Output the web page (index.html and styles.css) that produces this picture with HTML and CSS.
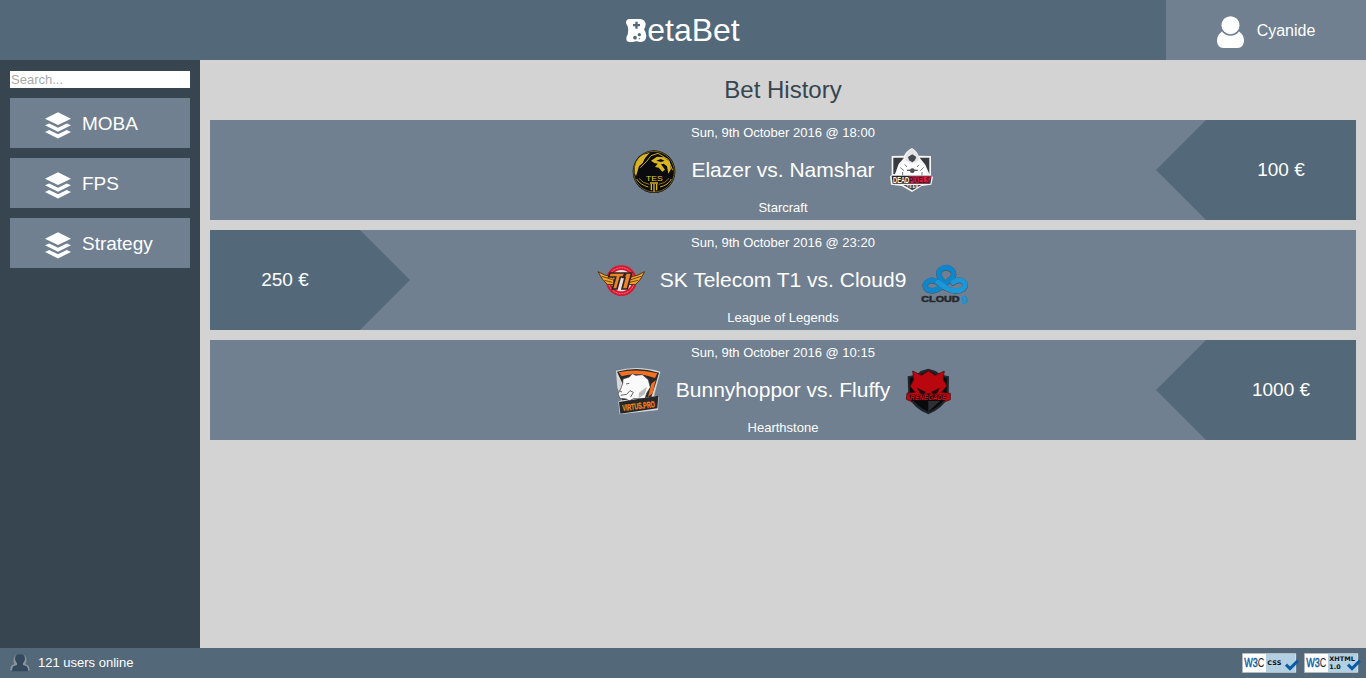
FILE: index.html
```html
<!DOCTYPE html>
<html lang="en">
<head>
<meta charset="utf-8">
<title>BetaBet</title>
<link rel="stylesheet" href="styles.css">
</head>
<body>
<header class="top">
  <h1 class="brand"><svg class="brand-b" viewBox="48 36 63 75"><path fill="#fff" d="M56 39H92Q106 42 107 54Q107 63 102 70Q108 78 109 90Q108 106 94 108Q87 109 82 106Q76 105 71 107Q65 109 57 108Q48 106 49 97Q49 91 53 86Q57 73 53 61Q48 56 48 48Q49 40 56 39Z"/><g fill="#536878"><path d="M76 47h7v7h7v7h-7v7h-7v-7h-7v-7h7z"/><circle cx="88" cy="86" r="5"/><circle cx="75" cy="95" r="5.500"/><circle cx="88" cy="98" r="2"/></g></svg>etaBet</h1>
  <a class="user"><svg class="user-icon" viewBox="0 0 28 32"><circle cx="13.500" cy="9.200" r="9" fill="#fff"/><path fill="#fff" d="M5 15.500C7.500 18.500 10 19.800 13.500 19.800S19.500 18.500 22 15.500C25 17.500 27 20.500 27 24.500C27 29 24.500 32 20.500 32H6.500C2.500 32 0 29 0 24.500C0 20.500 2 17.500 5 15.500Z"/></svg><span>Cyanide</span></a>
</header>
<div class="middle">
  <nav class="side">
    <input class="search" type="text" placeholder="Search...">
    <a class="cat"><svg class="layers" viewBox="0 0 26 27"><path d="M13 .2L26 6.700L13 13L0 6.700Z"/><path d="M0 13.200L4.200 11.500L13 15.700L21.800 11.500L26 13.200L13 19.700Z"/><path d="M0 19.900L4.200 18L13 22.200L21.800 18L26 19.900L13 26.500Z"/></svg><span>MOBA</span></a>
    <a class="cat"><svg class="layers" viewBox="0 0 26 27"><path d="M13 .2L26 6.700L13 13L0 6.700Z"/><path d="M0 13.200L4.200 11.500L13 15.700L21.800 11.500L26 13.200L13 19.700Z"/><path d="M0 19.900L4.200 18L13 22.200L21.800 18L26 19.900L13 26.500Z"/></svg><span>FPS</span></a>
    <a class="cat"><svg class="layers" viewBox="0 0 26 27"><path d="M13 .2L26 6.700L13 13L0 6.700Z"/><path d="M0 13.200L4.200 11.500L13 15.700L21.800 11.500L26 13.200L13 19.700Z"/><path d="M0 19.900L4.200 18L13 22.200L21.800 18L26 19.900L13 26.500Z"/></svg><span>Strategy</span></a>
  </nav>
  <main class="content">
    <h2 class="title">Bet History</h2>
    <section class="bet">
      <div class="info">
        <p class="date">Sun, 9th October 2016 @ 18:00</p>
        <div class="match">
          <svg class="logo" viewBox="9 7 150 150">
            <circle cx="87" cy="84" r="64" fill="#0b0b0d"/>
            <circle cx="87" cy="84" r="61" fill="none" stroke="#a3871a" stroke-width="2"/>
            <path fill="#d9b423" d="M29 88Q26 50 53 34L75 27Q58 42 53 58L42 68L33 98Z"/>
            <path fill="none" stroke="#caa520" stroke-width="3" d="M46 72L66 52L78 36L99 29L130 48L143 80M35 106Q45 123 70 130M139 106Q130 124 105 130"/>
            <path fill="none" stroke="#8f761c" stroke-width="3" d="M42 104Q53 119 73 122M132 104Q122 119 101 122"/>
            <path fill="#d9b423" d="M78 51L96 39L117 41L134 54L138 76L130 90L126 68L116 60L108 62L120 78L112 84L101 72L90 70L98 60L88 58Z"/>
            <path fill="#0b0b0d" d="M94 51L107 46L119 51L108 55Z"/>
            <path stroke="#d9b423" stroke-width="4" d="M75 118H99M79 121V140M87 121V145M95 121V140"/>
            <text x="88" y="111" text-anchor="middle" class="mark plain" font-size="24" fill="#e7c929" textLength="50" lengthAdjust="spacingAndGlyphs">TES</text>
          </svg>
          <span class="teams">Elazer vs. Namshar</span>
          <svg class="logo" viewBox="18 10 150 150">
            <path fill="#f5f5f5" d="M90 16Q104 24 110 39L147 40V98L153 103L148 126L119 130L90 148L59 130L27 126L24 101L29 97V40L66 39Q73 24 90 16Z"/>
            <path fill="#383c41" d="M34 45H66L50 64L39 94H34ZM113 45H142V94L130 66Z"/>
            <path fill="#e4e4e6" d="M69 46L77 27L90 18L103 28L111 46L107 57L91 65L73 56Z"/>
            <path fill="#45484e" d="M78 43L91 35L103 43L99 53L91 59L81 53Z"/>
            <path fill="#fff" d="M73 55L91 63L108 54L130 72L134 98H42L49 69Z"/>
            <path fill="none" stroke="#74787d" stroke-width="3" d="M55 75L66 84M125 74L115 84M68 65L75 73M111 66L105 73M62 98V88M120 98V88"/>
            <circle cx="91" cy="84" r="7" fill="#42464c"/><path stroke="#555" stroke-width="4" d="M75 83H107"/>
            <path fill="#25272b" d="M29 99H149L145 123H32Z"/>
            <path fill="#d91f47" d="M82 101H147L143 122H82Z"/>
            <text x="33" y="120" class="mark" font-size="25" fill="#fff" textLength="110" lengthAdjust="spacingAndGlyphs">DEAD<tspan fill="#4c1020">PIXELS</tspan></text>
            <path fill="#3d4045" d="M64 127H118L91 143Z"/>
            <text x="91" y="136" text-anchor="middle" class="mark" font-size="9" fill="#fff" textLength="34">TEAM</text>
          </svg>
        </div>
        <p class="game">Starcraft</p>
      </div>
      <div class="stake right">100 €</div>
    </section>
    <section class="bet">
      <div class="info">
        <p class="date">Sun, 9th October 2016 @ 23:20</p>
        <div class="match">
          <svg class="logo" viewBox="20 4 150 150">
            <circle cx="93" cy="78" r="46" fill="#d9152f"/>
            <circle cx="93" cy="78" r="39" fill="none" stroke="#ef9aa8" stroke-width="3" stroke-dasharray="3 2"/>
            <circle cx="93" cy="78" r="32" fill="#ecdede"/>
            <path fill="#efa72b" stroke="#5a3516" stroke-width="3" d="M23 51L43 61L66 66L74 90L51 89L39 77L32 67ZM163 51L143 61L122 67L112 90L136 89L148 77L154 67Z"/>
            <path fill="none" stroke="#754415" stroke-width="3" d="M34 65L66 75M42 77L66 83M152 65L122 75M144 77L118 83"/>
            <path fill="#e8842a" stroke="#31201e" stroke-width="5" d="M59 55H104L98 67H90L80 103H66L76 67H55ZM108 55H124L111 103H95L104 68H99Z"/>
          </svg>
          <span class="teams">SK Telecom T1 vs. Cloud9</span>
          <svg class="logo" viewBox="21 -6 150 150">
            <g fill="none" stroke="#3f586b" stroke-width="17" stroke-linejoin="round" stroke-linecap="round"><path d="M91 70Q72 45 87 35Q103 23 119 36Q132 50 118 62L91 85Q69 104 48 96Q33 85 44 74Q60 61 78 74L102 91Q134 107 154 93Q166 80 153 71Q138 61 123 75"/></g>
            <g fill="none" stroke="#0f86cc" stroke-width="15" stroke-linejoin="round" stroke-linecap="round"><path d="M91 69Q72 44 87 34Q103 22 119 35Q132 49 118 61L91 84Q69 103 48 95Q33 84 44 73Q60 60 78 73"/><path stroke="#1c98d8" d="M78 73L102 90Q134 106 154 92Q166 79 153 70Q138 60 123 74"/></g>
            <text x="28" y="131" class="mark" font-size="25" fill="#25282b" stroke="#25282b" stroke-width="1.500" textLength="115" lengthAdjust="spacingAndGlyphs">CLOUD</text>
            <text x="145" y="137" class="mark" font-size="33" fill="#1793d2" stroke="#1793d2" textLength="21" lengthAdjust="spacingAndGlyphs">9</text>
          </svg>
        </div>
        <p class="game">League of Legends</p>
      </div>
      <div class="stake left">250 €</div>
    </section>
    <section class="bet">
      <div class="info">
        <p class="date">Sun, 9th October 2016 @ 10:15</p>
        <div class="match">
          <svg class="logo" viewBox="15 12 150 150">
            <path fill="#d8d8d8" d="M24 26Q89 8 157 29L148 64L138 101L152 103L150 144L35 157L31 119L42 113L28 77Z"/>
            <path fill="#292929" d="M27 29Q90 12 153 32L143 65L130 105L42 115L47 72Z"/>
            <path fill="#f37021" d="M32 31Q88 19 148 34L141 48Q89 28 41 43ZM130 65L143 55L134 94L120 105Z"/>
            <path fill="#fafafa" stroke="#3b3b3b" stroke-width="2" d="M45 51L64 45L73 35L83 40L103 38L121 53L127 76L116 94L111 110H76L64 117L55 111L36 109L30 96L38 81L44 65Z"/>
            <path fill="none" stroke="#666" stroke-width="3" d="M38 100L56 97L66 86L76 91L68 105M54 66L64 64M34 86L42 90"/>
            <path fill="#bbb" d="M93 92L117 74L110 97L92 108Z"/>
            <path fill="#272727" d="M33 120L151 101L148 139L37 155Z"/>
            <text x="44" y="147" class="mark" transform="rotate(-7 44 147)" font-size="26" fill="#f58220" stroke="#f58220" textLength="98" lengthAdjust="spacingAndGlyphs">VIRTUS.PRO</text>
          </svg>
          <span class="teams">Bunnyhoppor vs. Fluffy</span>
          <svg class="logo" viewBox="15 12 150 150">
            <path fill="#20252a" d="M29 43Q58 40 68 27L91 20L113 27Q128 40 153 43L152 102Q136 138 91 157Q45 138 31 102Z"/>
            <path fill="#090a0c" d="M35 49L67 38L91 27L115 38L146 49V101Q128 135 91 149Q53 132 37 101Z"/>
            <path fill="#2c3034" d="M91 117H126L91 149Z"/>
            <path fill="#b9060f" stroke="#44090e" stroke-width="2" d="M44 27L71 40L91 26L111 40L139 27L135 52L147 72L130 91L157 94V113L139 120L126 107H57L42 120L25 112L27 93L52 91L36 73L47 54Z"/>
            <path fill="#26090d" d="M57 77L84 90L77 98L65 93ZM125 77L99 90L107 98L118 93ZM85 94H99L91 100Z"/>
            <path fill="#17090b" d="M34 98H146L141 117H40Z"/>
            <text x="91" y="114" text-anchor="middle" class="mark slant" font-size="19" fill="#d20b16" textLength="108" lengthAdjust="spacingAndGlyphs">RENEGADE</text>
          </svg>
        </div>
        <p class="game">Hearthstone</p>
      </div>
      <div class="stake right">1000 €</div>
    </section>
  </main>
</div>
<footer class="bottom">
  <div class="online"><svg class="people" viewBox="30 27 60 54"><path fill="#8c9499" d="M47 31H73Q81 38 79 50L76 57L86 62L90 76H30L33 63L43 57Q36 43 47 31Z"/><path fill="#34495e" d="M60 28Q75 28 75 41Q75 49 69 55V60L80 64Q85 68 84 79H36Q36 68 40 64L51 60V55Q45 49 45 41Q45 28 60 28Z"/></svg><span>121 users online</span></div>
  <div class="badges">
    <svg class="badge" viewBox="18 14 171 60"><path fill="#fff" stroke="#99a3aa" stroke-width="2" d="M19 15H180V73H19Z"/><path fill="#b3d0e2" d="M90 17H178V71H90Z"/><text x="25" y="57" class="w3" textLength="60" lengthAdjust="spacingAndGlyphs">W3<tspan class="c">C</tspan></text><text x="94" y="51" class="std" textLength="42" lengthAdjust="spacingAndGlyphs">CSS</text><path fill="none" stroke="#0c5ca5" stroke-width="9" d="M150 49L162 61L186 37"/></svg>
    <svg class="badge" viewBox="18 14 171 60"><path fill="#fff" stroke="#99a3aa" stroke-width="2" d="M19 15H180V73H19Z"/><path fill="#b3d0e2" d="M90 17H178V71H90Z"/><text x="25" y="57" class="w3" textLength="60" lengthAdjust="spacingAndGlyphs">W3<tspan class="c">C</tspan></text><text x="94" y="39" class="std" textLength="77" lengthAdjust="spacingAndGlyphs">XHTML</text><text x="94" y="61" class="std" textLength="34" lengthAdjust="spacingAndGlyphs">1.0</text><path fill="none" stroke="#0c5ca5" stroke-width="9" d="M150 49L162 61L186 37"/></svg>
  </div>
</footer>
</body>
</html>
```
FILE: styles.css
```css
* { box-sizing: border-box; }
body {
  margin: 0;
  height: 100vh;
  display: flex;
  flex-direction: column;
  overflow: hidden;
  font-family: "Liberation Sans", Arial, sans-serif;
  color: #fff;
  background: #d3d3d3;
}
h1, h2, p { margin: 0; font-weight: normal; }
svg { display: block; flex: none; }

.top {
  height: 60px;
  flex: none;
  display: grid;
  grid-template-columns: 200px 1fr 200px;
  background: #536878;
}
.brand {
  grid-column: 2;
  display: flex;
  align-items: center;
  justify-content: center;
  font-size: 32px;
  line-height: 60px;
}
.brand-b { width: 21px; height: 25px; }
.user {
  display: flex;
  align-items: center;
  justify-content: center;
  gap: 12px;
  background: #708090;
  font-size: 16px;
}
.user span { padding-top: 2px; }
.user-icon { width: 28px; height: 32px; margin-top: 4px; }

.middle { flex: 1; display: flex; min-height: 0; }
.side {
  width: 200px;
  flex: none;
  padding: 11px 10px;
  display: flex;
  flex-direction: column;
  gap: 10px;
  background: #36454f;
}
.search {
  width: 100%;
  height: 17px;
  padding: 1px;
  border: 0;
  font: 13px "Liberation Sans", Arial, sans-serif;
}
.search::placeholder { color: #a9a9a9; }
.cat {
  height: 50px;
  padding-left: 35px;
  display: flex;
  align-items: center;
  gap: 11px;
  background: #708090;
  font-size: 19px;
}
.cat span { padding-top: 2px; }
.layers { width: 26px; height: 27px; margin-top: 4px; fill: #fff; }

.content { flex: 1; padding: 0 10px; }
.title {
  height: 60px;
  line-height: 60px;
  text-align: center;
  font-size: 24px;
  color: #36454f;
}
.bet {
  display: grid;
  height: 100px;
  margin-bottom: 10px;
  background: #708090;
}
.info, .stake { grid-area: 1 / 1; }
.info {
  display: grid;
  grid-template-rows: 25px 50px 25px;
  text-align: center;
}
.date, .game { font-size: 13px; line-height: 25px; }
.match {
  display: flex;
  align-items: center;
  justify-content: center;
  gap: 13px;
  font-size: 21px;
}
.logo { width: 50px; height: 50px; margin-top: 2px; }
.mark { font-family: "Liberation Sans", Arial, sans-serif; font-weight: bold; }
.plain { font-weight: normal; }
.slant { font-style: italic; }
.stake {
  width: 200px;
  display: flex;
  align-items: center;
  justify-content: center;
  font-size: 19px;
  background: #536878;
}
.right {
  justify-self: end;
  padding-left: 50px;
  clip-path: polygon(0 50%, 50px 0, 100% 0, 100% 100%, 50px 100%);
}
.left {
  padding-right: 50px;
  clip-path: polygon(0 0, 150px 0, 100% 50%, 150px 100%, 0 100%);
}

.bottom {
  height: 30px;
  flex: none;
  padding: 0 5px 0 10px;
  display: flex;
  align-items: center;
  justify-content: space-between;
  background: #536878;
  font-size: 13px;
}
.online { display: flex; align-items: center; gap: 8px; }
.online span { padding-bottom: 2px; }
.people { width: 20px; height: 18px; }
.badges { display: flex; gap: 5px; }
.badge { width: 57px; height: 20px; }
.w3 { font: 40px "Liberation Sans", Arial, sans-serif; fill: #0c5ca5; stroke: #0c5ca5; stroke-width: 1.5px; }
.w3 .c { fill: #222; stroke: none; }
.std { font: bold 19px "DejaVu Sans", sans-serif; fill: #111; }
```
